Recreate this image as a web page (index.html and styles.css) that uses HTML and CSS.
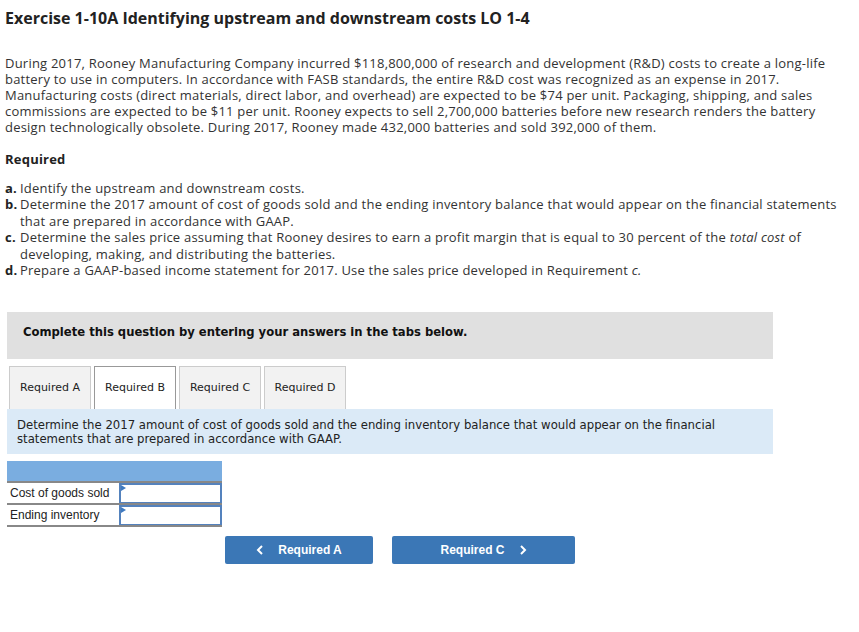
FILE: index.html
```html
<!DOCTYPE html>
<html lang="en">
<head>
  <meta charset="UTF-8" />
  <title>Exercise 1-10A</title>
  <link rel="stylesheet" href="styles.css">
</head>
<body>
  <div class="question">
    <h1 class="title">Exercise 1-10A Identifying upstream and downstream costs LO 1-4</h1>

    <p class="intro">During 2017, Rooney Manufacturing Company incurred $118,800,000 of research and development (R&amp;D) costs to create a long-life battery to use in computers. In accordance with FASB standards, the entire R&amp;D cost was recognized as an expense in 2017. Manufacturing costs (direct materials, direct labor, and overhead) are expected to be $74 per unit. Packaging, shipping, and sales commissions are expected to be $11 per unit. Rooney expects to sell 2,700,000 batteries before new research renders the battery design technologically obsolete. During 2017, Rooney made 432,000 batteries and sold 392,000 of them.</p>

    <h2 class="required">Required</h2>

    <ol class="parts">
      <li><b>a.</b><span>Identify the upstream and downstream costs.</span></li>
      <li><b>b.</b><span>Determine the 2017 amount of cost of goods sold and the ending inventory balance that would appear on the financial statements that are prepared in accordance with GAAP.</span></li>
      <li><b>c.</b><span>Determine the sales price assuming that Rooney desires to earn a profit margin that is equal to 30 percent of the <i>total cost</i> of developing, making, and distributing the batteries.</span></li>
      <li><b>d.</b><span>Prepare a GAAP-based income statement for 2017. Use the sales price developed in Requirement <i>c.</i></span></li>
    </ol>
  </div>

  <div class="answer-area">
    <div class="notice">Complete this question by entering your answers in the tabs below.</div>

    <div class="tabs">
      <div class="tab">Required A</div>
      <div class="tab active">Required B</div>
      <div class="tab">Required C</div>
      <div class="tab">Required D</div>
    </div>

    <div class="tab-panel">Determine the 2017 amount of cost of goods sold and the ending inventory balance that would appear on the financial statements that are prepared in accordance with GAAP.</div>

    <table class="answers">
      <tr class="head"><th colspan="2"></th></tr>
      <tr>
        <td class="label">Cost of goods sold</td>
        <td class="cell"><div class="input"></div></td>
      </tr>
      <tr>
        <td class="label">Ending inventory</td>
        <td class="cell"><div class="input"></div></td>
      </tr>
    </table>

    <div class="nav">
      <button class="btn prev">
        <svg width="8" height="10" viewBox="0 0 8 10"><polyline points="6,1 2,5 6,9" fill="none" stroke="#fff" stroke-width="2"/></svg>
        <span>Required A</span>
      </button>
      <button class="btn next">
        <span>Required C</span>
        <svg width="8" height="10" viewBox="0 0 8 10"><polyline points="2,1 6,5 2,9" fill="none" stroke="#fff" stroke-width="2"/></svg>
      </button>
    </div>
  </div>
</body>
</html>
```

FILE: styles.css
```css
body {
  margin: 0;
  padding: 0;
  background: #fff;
  color: #333;
  font-family: "Open Sans", "Liberation Sans", sans-serif;
}

.question {
  padding: 0 5px;
  letter-spacing: 0.22px;
}

.title {
  margin: 0;
  padding-top: 8px;
  font-size: 16px;
  line-height: 20px;
  font-weight: bold;
  color: #222;
  letter-spacing: 0;
}

.intro {
  margin: 27px 0 0;
  font-size: 13px;
  line-height: 16px;
  width: 840px;
}

.required {
  margin: 16px 0 0;
  font-size: 13px;
  line-height: 16px;
  font-weight: bold;
  color: #222;
}

.parts {
  list-style: none;
  margin: 13px 0 0;
  padding: 0;
  width: 840px;
  font-size: 13px;
  line-height: 16.4px;
}

.parts li {
  display: flex;
}

.parts b {
  flex: 0 0 15px;
  color: #222;
}

.answer-area {
  margin: 34px 0 0 7px;
  width: 766px;
  font-family: "DejaVu Sans", Verdana, sans-serif;
}

.notice {
  background: #e0e0e0;
  color: #111;
  font-size: 11.6px;
  font-weight: bold;
  line-height: 16px;
  padding: 12px 16px 19px;
}

.tabs {
  display: flex;
  gap: 3px;
  margin-top: 7px;
  padding-left: 2px;
}

.tab {
  width: 80px;
  height: 42px;
  line-height: 42px;
  text-align: center;
  font-size: 11px;
  color: #222;
  background: #f2f2f2;
  border: 1px solid #ccc;
  border-bottom: none;
}

.tab.active {
  background: #fff;
  border-color: #999;
}

.tab-panel {
  background: #dbeaf7;
  color: #222;
  font-size: 11.7px;
  line-height: 14px;
  padding: 9px 10px 8px;
}

.answers {
  margin-top: 7px;
  border-collapse: collapse;
  width: 215px;
  font-family: "Liberation Sans", Arial, sans-serif;
  font-size: 12px;
  color: #222;
}

.answers .head th {
  background: #7aade0;
  height: 20px;
  padding: 0;
  border-bottom: 2px solid #888;
}

.answers .label {
  width: 109px;
  padding: 0 0 0 3px;
  height: 20px;
  border-bottom: 2px solid #888;
}

.answers .cell {
  padding: 0;
  border-bottom: 2px solid #888;
}

.input {
  position: relative;
  height: 17px;
  border: 2px solid #5482bd;
  border-bottom-width: 1px;
  background: #fff;
}

.input::before {
  content: "";
  position: absolute;
  top: 0;
  left: 0;
  border-style: solid;
  border-width: 3px 0 3px 5px;
  border-color: transparent transparent transparent #3f7ac0;
}

.nav {
  display: flex;
  gap: 19px;
  margin: 9px 0 0 218px;
}

.btn {
  display: flex;
  align-items: center;
  justify-content: center;
  gap: 14px;
  height: 28px;
  padding: 0;
  border: none;
  border-radius: 2px;
  background: #3b77b6;
  color: #fff;
  font-family: "Liberation Sans", Arial, sans-serif;
  font-size: 12px;
  font-weight: bold;
}

.btn.prev {
  width: 148px;
}

.btn.next {
  width: 183px;
}
```
